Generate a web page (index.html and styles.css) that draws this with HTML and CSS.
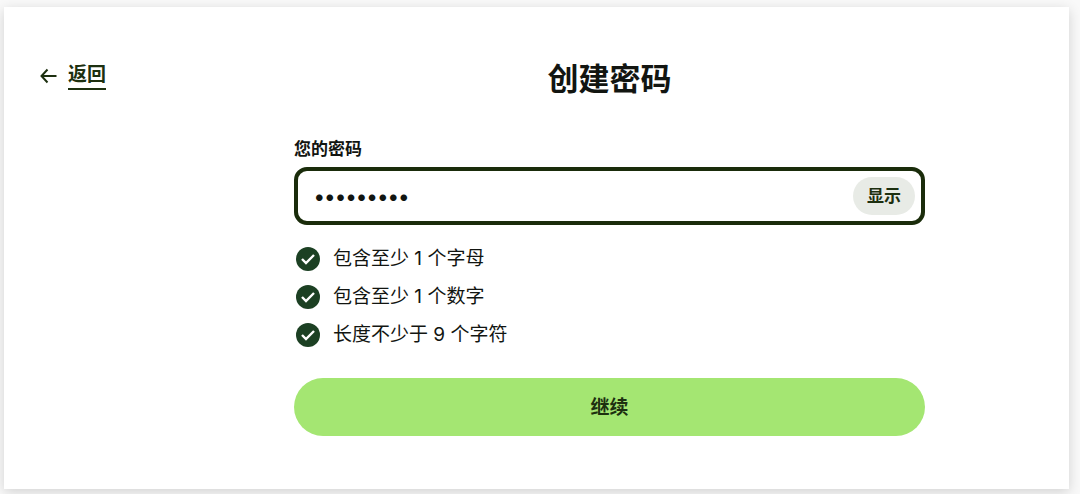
FILE: index.html
```
<!DOCTYPE html>
<html lang="zh-CN">
	<head>
		<meta charset="UTF-8" />
		<meta name="viewport" content="width=device-width, initial-scale=1.0" />
		<title>创建密码</title>
		<link rel="stylesheet" href="styles.css">
	</head>
	<body>
		<main class="card">
			<nav class="back">
				<svg class="back-icon" viewBox="0 0 18 16" aria-hidden="true">
					<path d="M16.500 8H1.500M7.500 1.500L1.500 8l6 6.500" />
				</svg>
				<a class="back-link" href="#">返回</a>
			</nav>

			<form class="password-form">
				<h1 class="title">创建密码</h1>

				<label class="label" for="password">您的密码</label>
				<div class="field">
					<input class="field-input" type="password" id="password" value="abcdefgh9" />
					<button class="show-btn" type="button">显示</button>
				</div>

				<ul class="rules">
					<li class="rule">
						<svg class="rule-icon" viewBox="0 0 24 24" aria-hidden="true">
							<circle cx="12" cy="12" r="12" />
							<path d="M6 12l4 4 8-8" />
						</svg>
						包含至少 1 个字母
					</li>
					<li class="rule">
						<svg class="rule-icon" viewBox="0 0 24 24" aria-hidden="true">
							<circle cx="12" cy="12" r="12" />
							<path d="M6 12l4 4 8-8" />
						</svg>
						包含至少 1 个数字
					</li>
					<li class="rule">
						<svg class="rule-icon" viewBox="0 0 24 24" aria-hidden="true">
							<circle cx="12" cy="12" r="12" />
							<path d="M6 12l4 4 8-8" />
						</svg>
						长度不少于 9 个字符
					</li>
				</ul>

				<button class="submit-btn" type="submit">继续</button>
			</form>
		</main>
	</body>
</html>
```
FILE: styles.css
```
* {
	box-sizing: border-box;
}

body {
	margin: 0;
	padding: 7px 11px 5px 4px;
	background-color: #f9f9f9;
	color: #121511;
	font-family: Inter, "Noto Sans CJK SC", sans-serif;
	font-size: 19px;
	line-height: 24px;
}

button,
input {
	font-family: inherit;
	color: inherit;
}

.card {
	display: grid;
	grid-template-columns: 254px 1fr;
	padding: 50px 144px 53px 36px;
	background-color: white;
	box-shadow: 0 3px 12px rgba(0, 0, 0, 0.16);
}

.back {
	display: flex;
	align-items: center;
	align-self: start;
	gap: 10px;
	padding-top: 5px;
	color: #1d3010;
}

.back-icon {
	width: 18px;
	height: 16px;
	fill: none;
	stroke: currentColor;
	stroke-width: 2;
}

.back-link {
	border-bottom: 2px solid;
	color: inherit;
	font-weight: 600;
	line-height: 26px;
	text-decoration: none;
}

.password-form {
	display: flex;
	flex-direction: column;
}

.title {
	margin: 0 0 36px;
	font-size: 31px;
	font-weight: 600;
	line-height: 44px;
	text-align: center;
}

.label {
	margin-bottom: 6px;
	font-size: 17px;
	font-weight: 600;
}

.field {
	display: flex;
	align-items: center;
	padding: 6px;
	border: 4px solid #1a2c0b;
	border-radius: 13px;
}

.field-input {
	flex: 1;
	min-width: 0;
	padding: 0 10px;
	border: none;
	outline: none;
	background: none;
	font-size: 21px;
	font-weight: 600;
}

.show-btn {
	height: 38px;
	padding: 0 14px 3px;
	border: none;
	border-radius: 19px;
	background-color: #e8ebe6;
	color: #1d3010;
	font-size: 17px;
	font-weight: 600;
	cursor: pointer;
}

.rules {
	display: flex;
	flex-direction: column;
	gap: 14px;
	margin: 22px 0 31px;
	padding: 0 2px;
	list-style: none;
}

.rule {
	display: flex;
	align-items: center;
	gap: 13px;
}

.rule-icon {
	width: 24px;
	height: 24px;
	fill: #1c4023;
}

.rule-icon path {
	fill: none;
	stroke: white;
	stroke-width: 2.4;
}

.submit-btn {
	height: 58px;
	padding: 0 16px 3px;
	border: none;
	border-radius: 29px;
	background-color: #a4e672;
	color: #1d3010;
	font-size: 19px;
	font-weight: 600;
	cursor: pointer;
}
```
